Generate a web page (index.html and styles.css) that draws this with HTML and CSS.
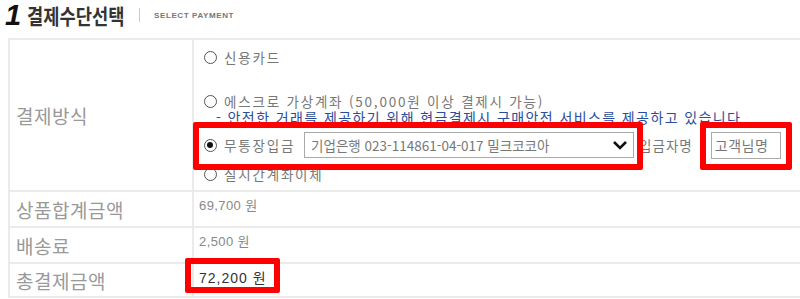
FILE: index.html
```html
<!DOCTYPE html>
<html lang="ko">

<head>
    <meta charset="UTF-8">
    <meta name="viewport" content="width=device-width, initial-scale=1.0">
    <title>결제수단선택</title>
    <link rel="stylesheet" href="styles.css">
</head>

<body>
    <div class="page">
        <div class="order-title">
            <span class="order-num">1</span>
            <span class="order-name">결제수단선택</span>
            <span class="order-bar"></span>
            <span class="order-sub">SELECT PAYMENT</span>
        </div>

        <table class="pay-table">
            <tr class="row-method">
                <th>결제방식</th>
                <td class="method-cell">
                    <div class="opt opt-card"><span class="radio"></span>신용카드</div>
                    <div class="opt opt-escrow"><span class="radio"></span>에스크로 가상계좌 (50,000원 이상 결제시 가능)</div>
                    <div class="escrow-note">- 안전한 거래를 제공하기 위해 현금결제시 구매안전 서비스를 제공하고 있습니다</div>
                    <div class="opt opt-bank">
                        <span class="radio checked"></span>무통장입금
                        <div class="bank-select">
                            <span>기업은행 023-114861-04-017 밀크코코아</span>
                            <svg width="16" height="12" viewBox="0 0 16 12"><path d="M2 3 L8 9 L14 3" fill="none" stroke="#111" stroke-width="2.6"/></svg>
                        </div>
                        <span class="payer-label">입금자명</span>
                        <div class="payer-input">고객님명</div>
                    </div>
                    <div class="opt opt-transfer"><span class="radio"></span>실시간계좌이체</div>
                </td>
            </tr>
            <tr class="row-price">
                <th>상품합계금액</th>
                <td class="price">69,700 원</td>
            </tr>
            <tr class="row-price">
                <th>배송료</th>
                <td class="price">2,500 원</td>
            </tr>
            <tr class="row-total">
                <th>총결제금액</th>
                <td class="price total">72,200 원</td>
            </tr>
        </table>

        <!-- 표시 박스 -->
        <div class="mark mark-bank"></div>
        <div class="mark mark-payer"></div>
        <div class="mark mark-total"></div>
    </div>
</body>

</html>
```

FILE: styles.css
```css
html,
body {
    margin: 0px;
    padding: 0px;
    overflow: hidden;
    background-color: #fff;
}

body {
    font-family: "Liberation Sans", "Noto Sans CJK KR", sans-serif;
    color: #777;
}

.page {
    position: relative;
    width: 800px;
    height: 299px;
}

.order-title {
    display: flex;
    align-items: center;
    height: 30px;
    padding-left: 5px;
}

.order-num {
    font-size: 29px;
    font-weight: bold;
    font-style: italic;
    color: #111;
    margin-right: 6px;
}

.order-name {
    display: inline-block;
    font-family: "Noto Sans CJK KR", sans-serif;
    font-size: 21px;
    font-weight: bold;
    color: #333;
    transform: scaleX(0.84);
    transform-origin: left center;
    margin-right: -20px;
}

.order-bar {
    width: 1px;
    height: 14px;
    background-color: #ccc;
    margin: 0px 14px 0px 16px;
}

.order-sub {
    font-size: 8px;
    font-weight: bold;
    letter-spacing: 0.6px;
    color: #777;
}

.pay-table {
    margin: 8px 0px 0px 8px;
    width: 812px;
    border-collapse: collapse;
}

.pay-table th,
.pay-table td {
    border: 2px solid #ebebeb;
    padding: 0px;
}

.pay-table th {
    width: 176px;
    padding-left: 6px;
    text-align: left;
    font-family: "Noto Sans CJK KR", sans-serif;
    font-size: 19px;
    font-weight: normal;
    letter-spacing: 0.5px;
    color: #999;
}

.row-method {
    height: 152px;
}

.row-price {
    height: 36px;
}

.row-total {
    height: 34px;
}

.method-cell {
    vertical-align: top;
    padding-left: 10px !important;
}

.opt {
    display: flex;
    align-items: center;
    font-family: "Noto Sans CJK KR", sans-serif;
    font-size: 13.5px;
    letter-spacing: 1.8px;
    color: #777;
    white-space: nowrap;
}

.radio {
    box-sizing: border-box;
    width: 13px;
    height: 13px;
    border: 1.5px solid #555;
    border-radius: 50%;
    margin-right: 7px;
    position: relative;
}

.radio.checked::after {
    content: "";
    position: absolute;
    left: 2px;
    top: 2px;
    width: 6px;
    height: 6px;
    border-radius: 50%;
    background-color: #111;
}

.opt-card {
    height: 20px;
    margin-top: 7px;
}

.opt-escrow {
    height: 16px;
    margin-top: 26px;
}

.escrow-note {
    height: 16px;
    line-height: 16px;
    padding-left: 12px;
    font-family: "Noto Sans CJK KR", sans-serif;
    font-size: 14px;
    letter-spacing: 1.4px;
    color: #2a4d9b;
    white-space: nowrap;
}

.opt-bank {
    height: 26px;
    margin-top: 7px;
}

.bank-select {
    box-sizing: border-box;
    display: flex;
    align-items: center;
    justify-content: space-between;
    width: 330px;
    height: 26px;
    margin-left: 9px;
    padding: 0px 5px 0px 6px;
    border: 1px solid #aaa;
    font-size: 13.5px;
    letter-spacing: 0px;
    color: #777;
}

.payer-label {
    margin-left: 5px;
    letter-spacing: 1px;
}

.payer-input {
    box-sizing: border-box;
    width: 70px;
    height: 27px;
    line-height: 25px;
    margin-left: 18px;
    padding-left: 3px;
    border: 1px solid #aaa;
    font-size: 14px;
    letter-spacing: 0.5px;
    color: #777;
}

.opt-transfer {
    height: 16px;
    margin-top: 8px;
}

.price {
    vertical-align: top;
    padding: 3px 0px 0px 5px !important;
    font-size: 13px;
    letter-spacing: 0.4px;
    color: #888;
}

.price.total {
    padding-top: 3px !important;
    font-size: 14px;
    letter-spacing: 1px;
    color: #333;
}

/* 빨간 표시 박스 */
.mark {
    position: absolute;
    box-sizing: border-box;
    border: 6px solid #f00;
    border-radius: 2px;
}

.mark-bank {
    left: 193px;
    top: 122px;
    width: 450px;
    height: 48px;
}

.mark-payer {
    left: 700px;
    top: 122px;
    width: 92px;
    height: 48px;
}

.mark-total {
    left: 185px;
    top: 258px;
    width: 95px;
    height: 35px;
}
```
